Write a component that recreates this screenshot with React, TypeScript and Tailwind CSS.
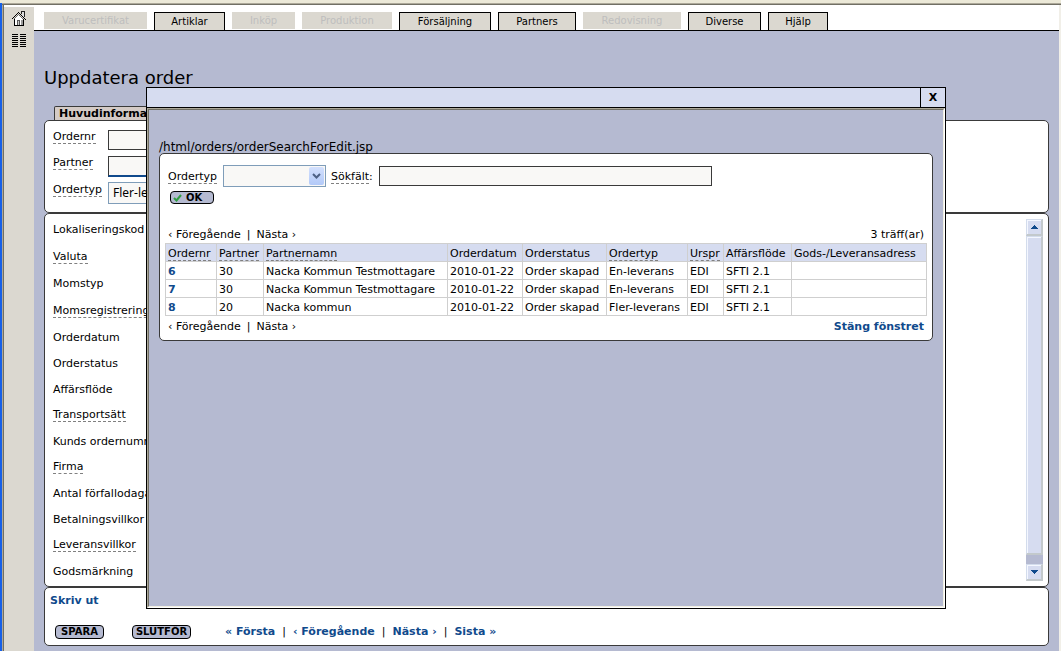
import type { ReactNode } from "react";

const tabs = [
  { label: "Varucertifikat", width: "w-[103px]", active: false },
  { label: "Artiklar", width: "w-[71px]", active: true },
  { label: "Inköp", width: "w-[63px]", active: false },
  { label: "Produktion", width: "w-[90px]", active: false },
  { label: "Försäljning", width: "w-[92px]", active: true },
  { label: "Partners", width: "w-[78px]", active: true },
  { label: "Redovisning", width: "w-[98px]", active: false },
  { label: "Diverse", width: "w-[73px]", active: true },
  { label: "Hjälp", width: "w-[60px]", active: true },
];

const fields = [
  { label: "Lokaliseringskod", help: false, height: "h-[27px]" },
  { label: "Valuta", help: true, height: "h-[27px]" },
  { label: "Momstyp", help: false, height: "h-[27px]" },
  { label: "Momsregistreringsnr", help: true, height: "h-[27px]" },
  { label: "Orderdatum", help: false, height: "h-[26px]" },
  { label: "Orderstatus", help: false, height: "h-[26px]" },
  { label: "Affärsflöde", help: false, height: "h-[26px]" },
  { label: "Transportsätt", help: true, height: "h-[26px]" },
  { label: "Kunds ordernummer", help: false, height: "h-[26px]" },
  { label: "Firma", help: true, height: "h-[26px]" },
  { label: "Antal förfallodagar", help: false, height: "h-[26px]" },
  { label: "Betalningsvillkor", help: false, height: "h-[26px]" },
  { label: "Leveransvillkor", help: true, height: "h-[26px]" },
  { label: "Godsmärkning", help: false, height: "h-[26px]" },
];

const columns = [
  { label: "Ordernr", help: true, width: "w-[51px]" },
  { label: "Partner", help: true, width: "w-[47px]" },
  { label: "Partnernamn", help: true, width: "w-[184px]" },
  { label: "Orderdatum", help: false, width: "w-[75px]" },
  { label: "Orderstatus", help: false, width: "w-[84px]" },
  { label: "Ordertyp", help: true, width: "w-[81px]" },
  { label: "Urspr", help: true, width: "w-[36px]" },
  { label: "Affärsflöde", help: false, width: "w-[68px]" },
  { label: "Gods-/Leveransadress", help: false, width: "w-[135px]" },
];

const orders = [
  ["6", "30", "Nacka Kommun Testmottagare", "2010-01-22", "Order skapad", "En-leverans", "EDI", "SFTI 2.1", ""],
  ["7", "30", "Nacka Kommun Testmottagare", "2010-01-22", "Order skapad", "En-leverans", "EDI", "SFTI 2.1", ""],
  ["8", "20", "Nacka kommun", "2010-01-22", "Order skapad", "Fler-leverans", "EDI", "SFTI 2.1", ""],
];

function Help({ children }: { children: ReactNode }) {
  return <span className="border-b border-dashed border-[#808080]">{children}</span>;
}

function HouseIcon() {
  return (
    <svg width="14" height="15" viewBox="0 0 14 15" shapeRendering="crispEdges" aria-hidden="true">
      <path d="M6 3h1v1h1v1h1v1h1v1h1v1h1v6H2V8h1V7h1V6h1V5h1z" fill="#fff" />
      <path d="M10 1h2v6h-2z" fill="#ddd" />
      <path d="M6 1h1v1h1v1h1v1h1v1h1v1h1v1h1v1h1v1h-1V8h-1V7h-1V6h-1V5H9V4H8V3H7V2H6v1H5v1H4v1H3v1H2v1H1v1H0V7h1V6h1V5h1V4h1V3h1V2h1z" fill="#000" />
      <path d="M6 3h1v1h1v1h1v1h1v1h1v1h-1V7H9V6H8V5H7V4H6v1H5v1H4v1H3v1H2V7h1V6h1V5h1V4h1z" fill="#666" />
      <path d="M9 0h4v6h-1V1h-2v2H9z" fill="#222" />
      <path d="M2 8h1v6h8V8h1v7H2z" fill="#000" />
      <path d="M5 9h3v5H5z" fill="#555" />
      <path d="M6 10h1v4H6z" fill="#ccc" />
      <path d="M9 9h2v5H9z" fill="#999" />
    </svg>
  );
}

function ListIcon() {
  return (
    <svg width="14" height="14" viewBox="0 0 14 14" shapeRendering="crispEdges" aria-hidden="true">
      <path d="M0 .5h6M8 .5h6M0 2.5h6M8 2.5h6M0 4.5h6M8 4.5h6M0 6.5h6M8 6.5h6M0 8.5h6M8 8.5h6M0 10.5h6M8 10.5h6M0 12.5h6M8 12.5h6" stroke="#000" />
    </svg>
  );
}

function Scrollbar() {
  const face =
    "border border-t-[#d3dcec] border-l-[#d3dcec] border-r-2 border-b-2 border-r-[#c3c9cc] border-b-[#c3c9cc] bg-[#d6dcf0] shadow-[inset_1px_1px_0_#f4f7ff]";
  return (
    <div className="mt-[5px] mr-[5px] mb-[5px] flex w-[17px] flex-col bg-[#b5bad1]">
      <button aria-label="Rulla upp" className={`flex h-[17px] items-center justify-center ${face}`}>
        <svg width="7" height="4" viewBox="0 0 7 4" shapeRendering="crispEdges"><path d="M3 0h1v1h1v1h1v1h1v1H0V3h1V2h1V1h1z" fill="#104a8c" /></svg>
      </button>
      <div className={`mb-[9px] flex-1 ${face}`} />
      <button aria-label="Rulla ner" className={`flex h-[17px] items-center justify-center ${face}`}>
        <svg width="7" height="4" viewBox="0 0 7 4" shapeRendering="crispEdges"><path d="M0 0h7v1H6v1H5v1H4v1H3V3H2V2H1V1H0z" fill="#104a8c" /></svg>
      </button>
    </div>
  );
}

function Pager() {
  return (
    <div className="flex gap-[6px]">
      <a href="#prev">‹ Föregående</a>
      <span>|</span>
      <a href="#next">Nästa ›</a>
    </div>
  );
}

function SearchDialog() {
  return (
    <div role="dialog" aria-label="Sök order" className="absolute top-[87px] left-[146px] flex h-[522px] w-[800px] flex-col border border-black bg-[#b5bad1]">
      <div className="flex h-5 shrink-0 border-b border-black bg-[#d6dcf0]">
        <div className="flex-1" />
        <button className="w-[25px] border-l border-black text-[11px] leading-none font-bold" aria-label="Stäng">X</button>
      </div>
      <div className="flex flex-1 flex-col border border-t-[#aca899] border-r-white border-b-white border-l-[#aca899]">
        <div className="flex-1 border border-t-[#716f64] border-r-[#f1efe2] border-b-[#f1efe2] border-l-[#716f64] px-[10px] pt-[31px]">
          <div className="h-3 text-[12px] leading-[13px]">/html/orders/orderSearchForEdit.jsp</div>
          <div className="rounded-[5px] border border-[#3a3a3a] bg-white px-[5px] pt-[11px] pb-[6px]">
            <div className="flex h-[22px] items-center pl-[3px]">
              <label htmlFor="search-type" className="w-[55px] leading-[13px]"><Help>Ordertyp</Help></label>
              <div className="relative h-[22px] w-[103px]">
                <select id="search-type" className="block h-full w-full appearance-none border border-[#7f9db9] bg-[#f9f8f6] px-1" defaultValue="">
                  <option value=""></option>
                </select>
                <span className="pointer-events-none absolute top-[2px] right-[2px] flex h-[18px] w-[15px] items-center justify-center rounded-[2px] bg-linear-to-b from-[#d3e0fd] to-[#b2c9f8]">
                  <svg width="9" height="6" viewBox="0 0 9 6"><path d="M1 1l3.500 3.500L8 1" fill="none" stroke="#4d6185" strokeWidth="2" /></svg>
                </span>
              </div>
              <label htmlFor="search-text" className="ml-[5px] w-12 leading-[13px]"><Help>Sökfält</Help>:</label>
              <input id="search-text" className="h-5 w-[333px] border border-[#3a3a3a] bg-[#f9f8f6] px-1" />
            </div>
            <button className="mt-[4px] ml-[5px] flex h-[13px] w-[44px] items-center rounded-[4px] border border-black bg-[#b5bad1] pl-[2px] text-[10px] leading-none font-bold">
              <svg width="9" height="8" viewBox="0 0 9 8" aria-hidden="true"><path d="M1 4l2.500 2.500L8 1" fill="none" stroke="#2f9e41" strokeWidth="2" /></svg>
              <span className="pl-1">OK</span>
            </button>
            <div className="mt-[24px] mb-px flex justify-between px-[3px] leading-[14px]">
              <Pager />
              <div>3 träff(ar)</div>
            </div>
            <table className="w-full table-fixed border-collapse leading-[13px] whitespace-nowrap">
              <thead>
                <tr className="h-[18px] bg-[#d6dcf0]">
                  {columns.map((c) => (
                    <th key={c.label} scope="col" className={`border border-[#cfcfcf] px-[2px] pt-[2px] text-left font-normal ${c.width}`}>
                      {c.help ? <Help>{c.label}</Help> : c.label}
                    </th>
                  ))}
                </tr>
              </thead>
              <tbody>
                {orders.map((row) => (
                  <tr key={row[0]} className="h-[18px]">
                    {row.map((cell, i) => (
                      <td key={columns[i].label} className="border border-[#cfcfcf] px-[2px] pt-[2px]">
                        {i === 0 ? <a href={`#order-${cell}`} className="font-bold text-[#104a8c]">{cell}</a> : cell}
                      </td>
                    ))}
                  </tr>
                ))}
              </tbody>
            </table>
            <div className="mt-[4px] flex justify-between px-[3px] leading-[14px]">
              <Pager />
              <a href="#close" className="font-bold text-[#104a8c]">Stäng fönstret</a>
            </div>
          </div>
        </div>
      </div>
    </div>
  );
}

export default function App() {
  const panel = "rounded-[5px] border border-[#3a3a3a] bg-white";
  const link = "font-bold text-[#104a8c]";
  return (
    <div className="relative flex min-h-screen flex-col bg-white font-['DejaVu_Sans',Verdana,sans-serif] text-[11px] text-black">
      <div className="h-[4px] border-b border-[#aca899] bg-[#ece9d8]" />
      <div className="h-px bg-[#716f64]" />
      <div className="flex flex-1 border-r-2 border-[#f1efe8]">
        <div className="-mt-[2px] w-[2px] bg-[#1660e8]" />
        <div className="w-[2px] border-l border-[#aca899] bg-[#716f64]" />
        <nav className="mt-[2px] flex w-[30px] flex-col items-center gap-2 bg-[#dbd8d0] pt-[4px]">
          <a href="#home" aria-label="Hem"><HouseIcon /></a>
          <a href="#list" aria-label="Lista"><ListIcon /></a>
        </nav>
        <div className="flex min-w-0 flex-1 flex-col bg-[#b5bad1]">
          <nav className="flex h-[26px] items-end gap-[7px] border-b border-black bg-white pl-[10px] text-[10px]">
            {tabs.map((t) =>
              t.active ? (
                <button key={t.label} className={`h-[18px] border border-b-0 border-black bg-[#dbd8d0] leading-none ${t.width}`}>{t.label}</button>
              ) : (
                <button key={t.label} disabled className={`mb-px h-[17px] bg-[#dbd8d0] leading-none text-[#bebebe] ${t.width}`}>{t.label}</button>
              ),
            )}
          </nav>
          <main className="pr-[10px] pl-[10px]">
            <h1 className="mt-[35px] text-[18px] leading-6">Uppdatera order</h1>
            <div className="mt-[16px] ml-[10px] h-[14px] w-[140px] rounded-t-[2px] border border-b-0 border-[#3a3a3a] bg-[#d4cbc6] pl-[4px] leading-[14px] font-bold">Huvudinformation</div>
            <section className={`h-[93px] px-2 pt-[9px] ${panel}`}>
              <div className="flex h-[26px]">
                <label htmlFor="order-no" className="w-[55px] leading-[13px]"><Help>Ordernr</Help></label>
                <input id="order-no" className="h-5 w-[120px] border border-[#3a3a3a] bg-[#f9f8f6]" />
              </div>
              <div className="flex h-[26px]">
                <label htmlFor="partner" className="w-[55px] leading-[13px]"><Help>Partner</Help></label>
                <input id="partner" className="h-[21px] w-[120px] border border-b-2 border-[#3a3a3a] border-b-[#104a8c] bg-[#f9f8f6]" />
              </div>
              <div className="flex h-[26px]">
                <label htmlFor="order-type" className="w-[55px] pt-px leading-[13px]"><Help>Ordertyp</Help></label>
                <select id="order-type" className="h-[22px] w-[120px] appearance-none border border-[#7f9db9] bg-[#f9f8f6] px-1 font-['Noto_Sans',sans-serif] text-[12px]">
                  <option>Fler-leverans</option>
                </select>
              </div>
            </section>
            <section className={`flex justify-between ${panel}`}>
              <ul className="py-[2px] pl-2">
                {fields.map((f) => (
                  <li key={f.label} className={`flex items-center leading-[13px] ${f.height}`}>
                    {f.help ? <Help>{f.label}</Help> : f.label}
                  </li>
                ))}
              </ul>
              <Scrollbar />
            </section>
            <section className={`h-[59px] px-[5px] pt-[6px] ${panel}`}>
              <a href="#print" className={`block leading-[14px] ${link}`}>Skriv ut</a>
              <div className="mt-[17px] flex items-center pl-[5px] leading-[14px]">
                <button className="h-[14px] w-[49px] rounded-[4px] border border-black bg-[#b5bad1] text-[10px] leading-none font-bold">SPARA</button>
                <button className="ml-7 h-[14px] w-[59px] rounded-[4px] border border-black bg-[#b5bad1] text-[10px] leading-none font-bold">SLUTFÖR</button>
                <div className="ml-[34px] flex gap-[7px]">
                  <a href="#first" className={link}>« Första</a>
                  <span>|</span>
                  <a href="#previous" className={link}>‹ Föregående</a>
                  <span>|</span>
                  <a href="#following" className={link}>Nästa ›</a>
                  <span>|</span>
                  <a href="#last" className={link}>Sista »</a>
                </div>
              </div>
            </section>
          </main>
        </div>
      </div>
      <SearchDialog />
    </div>
  );
}
